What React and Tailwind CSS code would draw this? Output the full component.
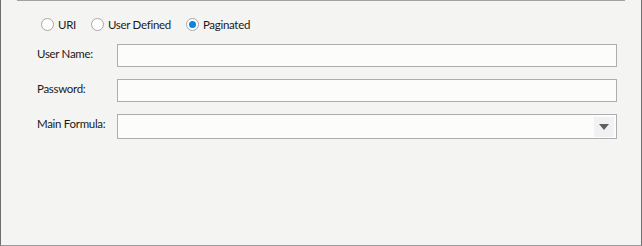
import React from "react";

function Radio({ label, checked }) {
  return (
    <label className="flex items-center gap-[4px] mr-[15px]">
      <span className="w-[13px] h-[13px] rounded-full border border-[#a8a8a8] bg-white flex items-center justify-center">
        {checked && <span className="w-[7px] h-[7px] rounded-full bg-[#0a84e0]" />}
      </span>
      <span>{label}</span>
    </label>
  );
}

function Row({ label, children }) {
  return (
    <div className="flex items-start">
      <div className="w-[116px] pl-[36px] whitespace-nowrap leading-[16px] pt-[2px]">{label}</div>
      {children}
    </div>
  );
}

export default function App() {
  return (
    <div
      className="w-[642px] h-[246px] bg-[#f4f5f2] border-l border-r border-b border-l-[#6e6e6e] border-r-[#6e6e6e] border-b-[#9a9a9a] text-[11.5px] tracking-[-0.3px] text-[#1a1a1a]"
      style={{ fontFamily: 'Lato, "Noto Sans", sans-serif' }}
    >
      {/* top divider */}
      <div className="ml-[16px] mr-[16px] border-t border-[#a0a0a0]" />

      <div className="flex items-center pl-[40px] pt-[15px] h-[32px] leading-[16px]">
        <Radio label="URI" />
        <Radio label="User Defined" />
        <Radio label="Paginated" checked />
      </div>

      <div className="flex flex-col gap-[12px] pt-[11px]">
        <Row label="User Name:">
          <div className="w-[500px] h-[23px] border border-[#adadad] bg-[#fcfdfa]" />
        </Row>
        <Row label="Password:">
          <div className="w-[500px] h-[23px] border border-[#adadad] bg-[#fcfdfa]" />
        </Row>
        <Row label="Main Formula:">
          <div className="w-[500px] h-[25px] border border-[#adadad] bg-[#fcfdfa] flex justify-end items-center pr-[2px]">
            <div className="w-[20px] h-[20px] bg-[#f1f0f3] flex items-center justify-center">
              <svg width="10" height="6" viewBox="0 0 10 6">
                <path d="M0 0 H10 L5 6 Z" fill="#5f5f5f" />
              </svg>
            </div>
          </div>
        </Row>
      </div>
    </div>
  );
}
